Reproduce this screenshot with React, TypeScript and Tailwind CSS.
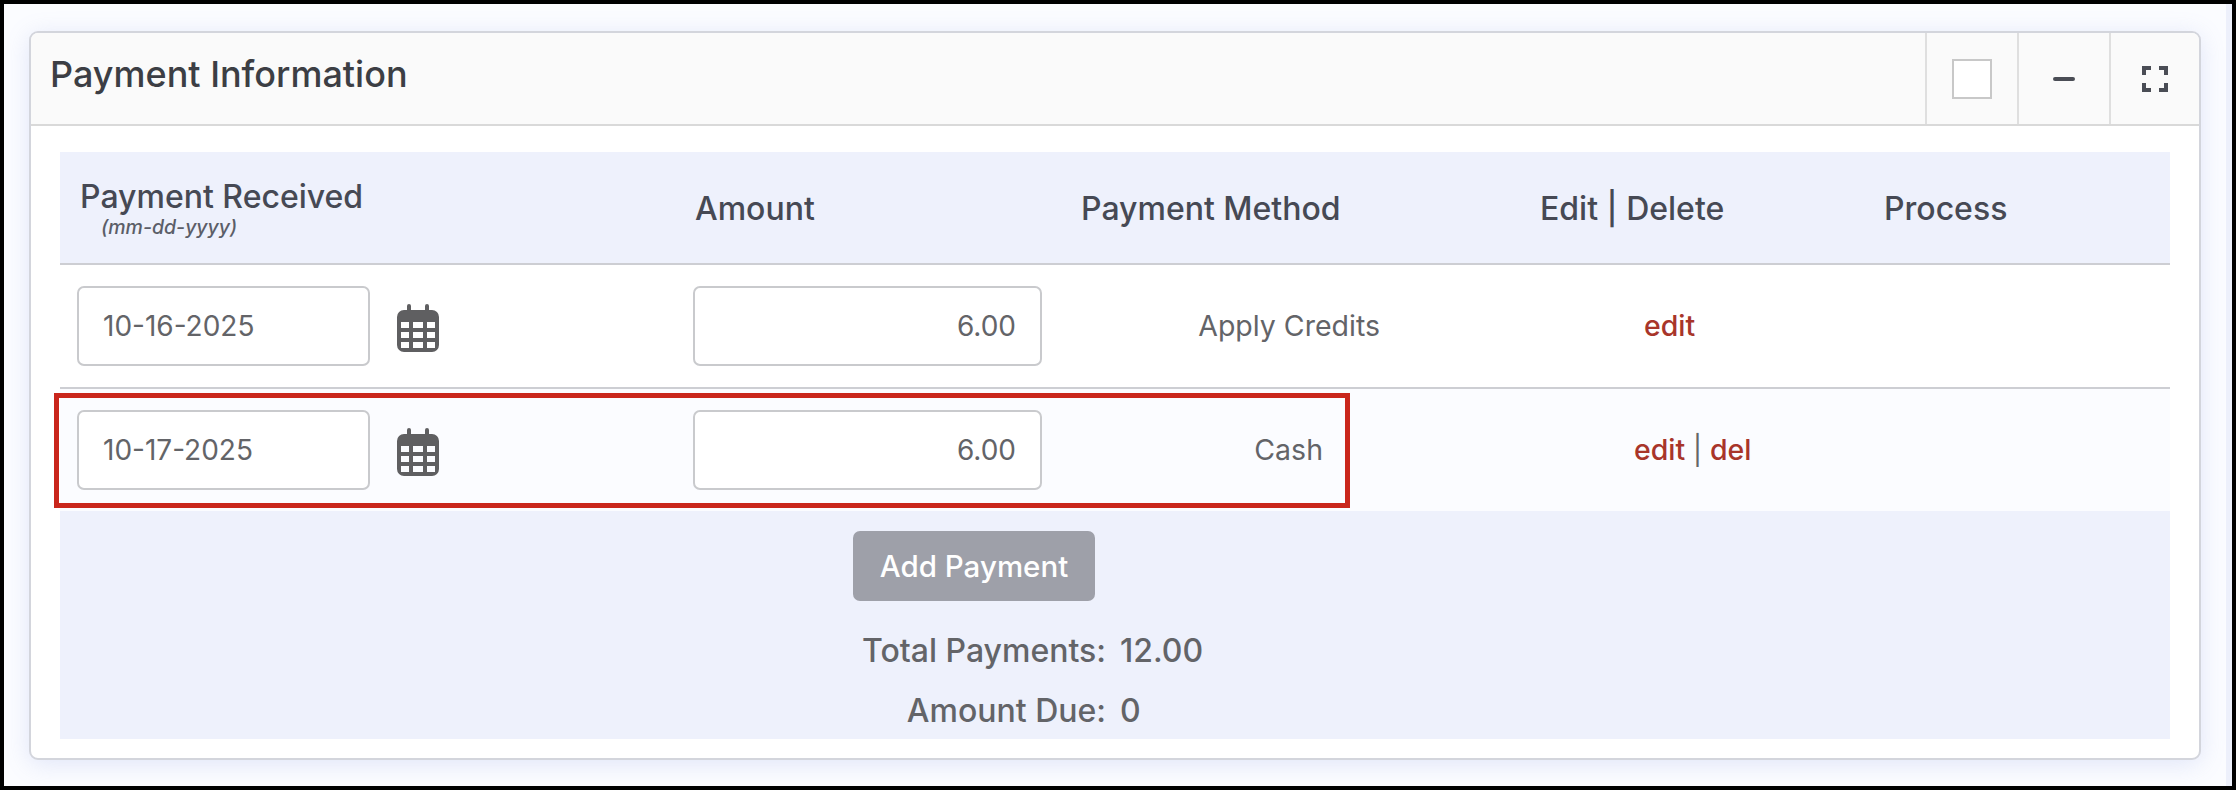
const CalendarIcon = () => (
  <svg width="42" height="48" viewBox="0 0 42 48" className="shrink-0 mt-[3px]">
    <path
      fill="#5f5f61"
      fillRule="evenodd"
      d="M10 6V2a2 2 0 0 1 4 0v4h14V2a2 2 0 0 1 4 0v4h3a7 7 0 0 1 7 7v28a7 7 0 0 1-7 7H7a7 7 0 0 1-7-7V13a7 7 0 0 1 7-7zM4 18v6h8v-6zm12 0v6h10v-6zm14 0v6h8v-6zM4 28v6h8v-6zm12 0v6h10v-6zm14 0v6h8v-6zM4 38v6h8v-6zm12 0v6h10v-6zm14 0v6h8v-6z"
    />
  </svg>
);

const FullscreenIcon = () => (
  <svg width="26" height="26" viewBox="0 0 26 26" fill="none" stroke="#4a4d55" strokeWidth="4">
    <path d="M2 9V2h7M17 2h7v7M24 17v7h-7M9 24H2v-7" />
  </svg>
);

const DateCell = ({ date }: { date: string }) => (
  <div className="w-[633px] pl-[17px] flex items-center gap-[27px]">
    <input
      readOnly
      value={date}
      className="w-[293px] h-[80px] bg-white border-2 border-[#c9cacd] rounded-[7px] pl-6 text-[28px] text-[#636468] outline-none"
    />
    <CalendarIcon />
  </div>
);

const AmountCell = () => (
  <div className="w-[349px] h-[80px] flex items-center justify-end bg-white border-2 border-[#c9cacd] rounded-[7px] pr-6 text-[28px]">
    6.00
  </div>
);

export default function App() {
  return (
    <div className="w-[2236px] h-[790px] bg-black p-1 font-['Inter',sans-serif]">
      <div className="h-full flex bg-[#fbfcff]">
        <div className="flex-1 pt-[27px] pl-[25px]">
          <div className="w-[2172px] h-[729px] bg-white border-2 border-[#d3d5dc] rounded-[9px] overflow-hidden shadow-[0_4px_24px_rgba(120,140,220,0.2)]">
            <div className="h-[93px] bg-[#fafafa] border-b-2 border-[#d9d9d9] flex items-center justify-between">
              <h1 className="pl-[19px] pb-[9px] text-[36px] font-medium text-[#3c3e44]">Payment Information</h1>
              <div className="flex h-full">
                <div className="w-[92px] border-l-2 border-[#dfdfdf] flex items-center justify-center">
                  <div className="w-10 h-10 border-2 border-[#c8c8c8] bg-white" />
                </div>
                <div className="w-[92px] border-l-2 border-[#dfdfdf] flex items-center justify-center">
                  <div className="w-[22px] h-[4px] rounded-full bg-[#4a4d55]" />
                </div>
                <div className="w-[90px] border-l-2 border-[#dfdfdf] flex items-center justify-center">
                  <FullscreenIcon />
                </div>
              </div>
            </div>

            <div className="pt-[26px] px-[29px]">
              <div className="h-[113px] pt-[2px] bg-[#eef1fc] border-b-2 border-[#cdced3] flex items-center text-[32px] font-medium text-[#464954]">
                <div className="w-[635px] pl-5">
                  <div className="leading-[40px] mt-[-4px]">Payment Received</div>
                  <div className="pl-[21px] text-[19.5px] italic leading-[20px] text-[#5b5e68]">(mm-dd-yyyy)</div>
                </div>
                <div className="w-[386px]">Amount</div>
                <div className="w-[459px]">Payment Method</div>
                <div className="w-[344px]">Edit | Delete</div>
                <div>Process</div>
              </div>

              <div className="h-[124px] bg-white border-b-2 border-[#cdced3] flex items-center text-[#636468]">
                <DateCell date="10-16-2025" />
                <AmountCell />
                <div className="w-[338px] text-right text-[28.5px]">Apply Credits</div>
                <div className="ml-[264px] text-[28.5px] font-medium text-[#a8352a]">edit</div>
              </div>

              <div className="relative h-[122px] bg-[#fbfcff] flex items-center text-[#636468]">
                <DateCell date="10-17-2025" />
                <AmountCell />
                <div className="w-[281px] text-right text-[28.5px]">Cash</div>
                <div className="ml-[311px] text-[28.5px] font-medium text-[#a8352a]">
                  edit <span className="text-[#666666] font-normal">|</span> del
                </div>
                <div className="absolute left-[-6px] top-[4px] w-[1296px] h-[115px] border-[5px] border-[#c9261c] pointer-events-none" />
              </div>

              <div className="h-[228px] bg-[#eef1fc] flex flex-col pt-5">
                <button className="shrink-0 ml-[793px] w-[242px] h-[70px] pt-[1px] rounded-[7px] bg-[#9ea0a9] text-white text-[29.5px] font-medium">Add Payment</button>
                <div className="shrink-0 mt-[20px] grid grid-cols-[1046px_1fr] gap-x-[14px] text-[32px] font-medium text-[#636468] leading-[60px]">
                  <div className="text-right">Total Payments:</div>
                  <div>12.00</div>
                  <div className="text-right">Amount Due:</div>
                  <div>0</div>
                </div>
              </div>
            </div>
          </div>
        </div>
        <div className="w-[6px] bg-[#edf0fb]" />
      </div>
    </div>
  );
}
